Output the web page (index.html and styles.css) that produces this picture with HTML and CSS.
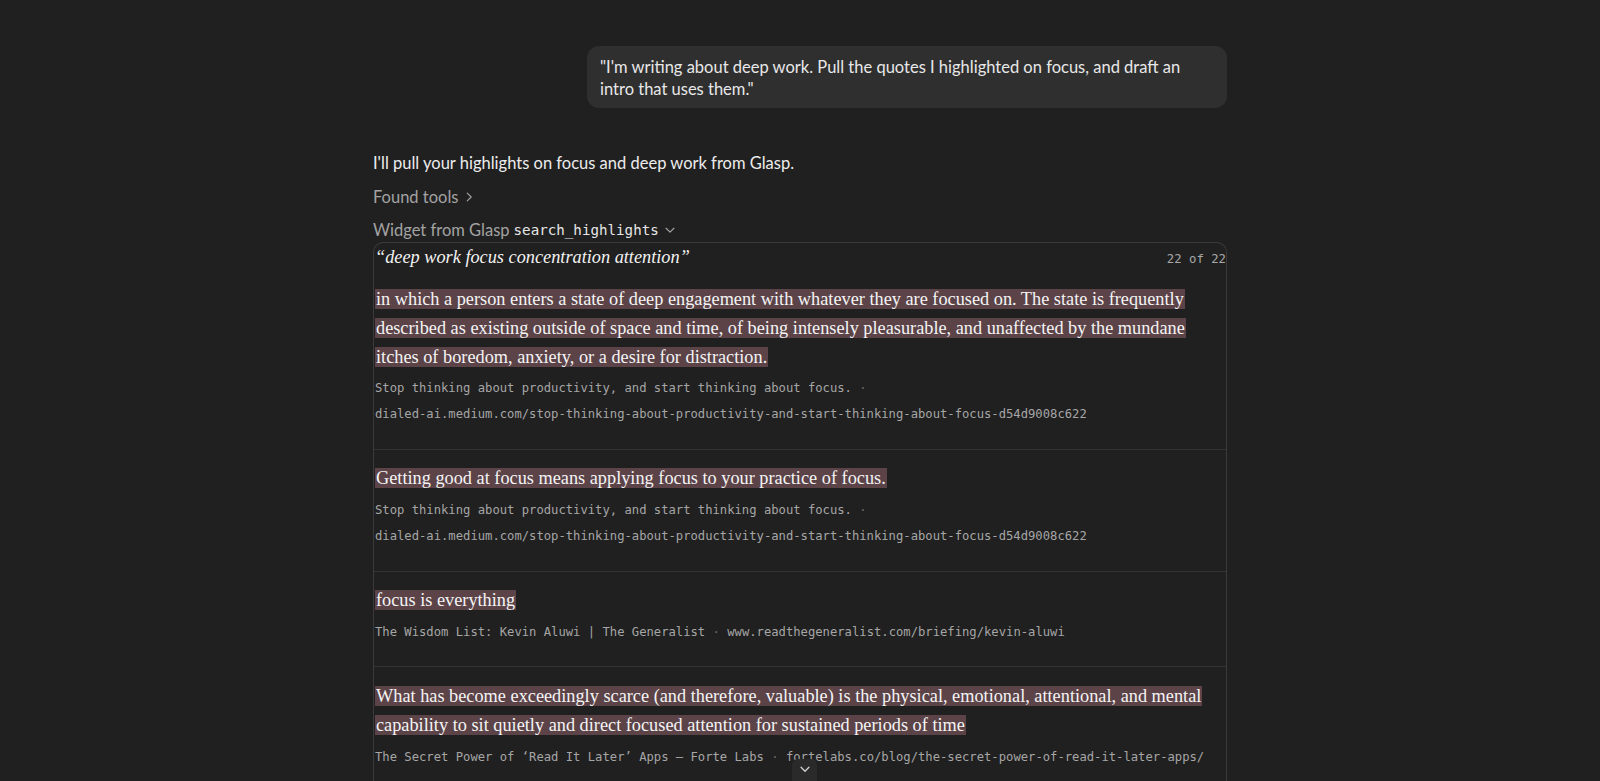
FILE: index.html
```html
<!DOCTYPE html>
<html lang="en">

<head>
    <meta charset="UTF-8">
    <meta name="viewport" content="width=device-width, initial-scale=1.0">
    <title>Glasp highlights</title>
    <link rel="stylesheet" href="styles.css">
</head>

<body>
    <div class="thread">
        <div class="column">
            <div class="user-row">
                <div class="bubble">"I'm writing about deep work. Pull the quotes I highlighted on focus, and draft an intro that uses them."</div>
            </div>

            <div class="reply">
                <div class="reply-text">I'll pull your highlights on focus and deep work from Glasp.</div>
                <div class="found">
                    Found tools
                    <svg width="14" height="14" viewBox="0 0 16 16" fill="none" stroke="currentColor" stroke-width="1.3" stroke-linecap="round" stroke-linejoin="round"><polyline points="6,3.5 10.5,8 6,12.5"/></svg>
                </div>
                <div class="widget-label">
                    Widget from Glasp <code>search_highlights</code>
                    <svg width="14" height="14" viewBox="0 0 16 16" fill="none" stroke="currentColor" stroke-width="1.3" stroke-linecap="round" stroke-linejoin="round"><polyline points="3.5,6 8,10.5 12.5,6"/></svg>
                </div>

                <div class="widget">
                    <div class="widget-head">
                        <span class="query">“deep work focus concentration attention”</span>
                        <span class="count">22 of 22</span>
                    </div>

                    <div class="hl-item">
                        <p class="quote"><mark>in which a person enters a state of deep engagement with whatever they are focused on. The state is frequently described as existing outside of space and time, of being intensely pleasurable, and unaffected by the mundane itches of boredom, anxiety, or a desire for distraction.</mark></p>
                        <div class="meta">Stop thinking about productivity, and start thinking about focus. <span class="dot">·</span> <span class="url">dialed-ai.medium.com/stop-thinking-about-productivity-and-start-thinking-about-focus-d54d9008c622</span></div>
                    </div>

                    <div class="hl-item">
                        <p class="quote"><mark>Getting good at focus means applying focus to your practice of focus.</mark></p>
                        <div class="meta">Stop thinking about productivity, and start thinking about focus. <span class="dot">·</span> <span class="url">dialed-ai.medium.com/stop-thinking-about-productivity-and-start-thinking-about-focus-d54d9008c622</span></div>
                    </div>

                    <div class="hl-item">
                        <p class="quote"><mark>focus is everything</mark></p>
                        <div class="meta">The Wisdom List: Kevin Aluwi | The Generalist <span class="dot">·</span> <span class="url">www.readthegeneralist.com/briefing/kevin-aluwi</span></div>
                    </div>

                    <div class="hl-item">
                        <p class="quote"><mark>What has become exceedingly scarce (and therefore, valuable) is the physical, emotional, attentional, and mental capability to sit quietly and direct focused attention for sustained periods of time</mark></p>
                        <div class="meta">The Secret Power of ‘Read It Later’ Apps — Forte Labs <span class="dot">·</span> <span class="url">fortelabs.co/blog/the-secret-power-of-read-it-later-apps/</span></div>
                    </div>
                </div>
            </div>
        </div>
    </div>

    <button class="scroll-down">
        <svg width="14" height="14" viewBox="0 0 16 16" fill="none" stroke="currentColor" stroke-width="1.5" stroke-linecap="round" stroke-linejoin="round"><polyline points="3.5,6 8,10.5 12.5,6"/></svg>
    </button>
</body>

</html>
```

FILE: styles.css
```css
* {
    margin: 0;
    padding: 0;
    box-sizing: border-box;
}

body {
    background-color: #202020;
    color: #ececec;
    font-family: "Lato", "Noto Sans", sans-serif;
    font-size: 16.5px;
}

.thread {
    height: 100vh;
    overflow: hidden;
}

.column {
    width: 854px;
    margin: 0 auto;
    padding-top: 46px;
}

.user-row {
    display: flex;
    justify-content: flex-end;
}

.bubble {
    max-width: 640px;
    padding: 10px 16px 8px 13px;
    background-color: #2f2f2f;
    border-radius: 12px;
    line-height: 22px;
    color: #e8e8e8;
}

.reply {
    margin-top: 43px;
}

.reply-text {
    line-height: 24px;
}

.found,
.widget-label {
    display: flex;
    align-items: center;
    gap: 4px;
    margin-top: 10px;
    line-height: 24px;
    color: #a3a3a3;
}

.widget-label {
    margin-top: 9px;
}

.widget-label code {
    font-family: "DejaVu Sans Mono", "Liberation Mono", monospace;
    font-size: 14.2px;
    color: #e6e6e6;
}

.widget {
    border: 1px solid #3a3a3a;
    border-bottom: none;
    border-radius: 10px 10px 0 0;
}

.widget-head {
    display: flex;
    justify-content: space-between;
    align-items: baseline;
    line-height: 28px;
    padding-left: 1px;
}

.query {
    font-family: "Liberation Serif", serif;
    font-style: italic;
    font-size: 18.3px;
    color: #f2f2f2;
}

.count {
    font-family: "DejaVu Sans Mono", "Liberation Mono", monospace;
    font-size: 12.3px;
    color: #a8a8a8;
}

.hl-item {
    padding: 12px 0 21.5px 1px;
}

.hl-item + .hl-item {
    border-top: 1px solid #333333;
    padding-top: 14.5px;
}

.quote {
    font-family: "Liberation Serif", serif;
    font-size: 18.3px;
    line-height: 28.8px;
}

.quote mark {
    background-color: #5b4348;
    color: #f4f4f4;
    padding: 0 1px;
    -webkit-box-decoration-break: clone;
    box-decoration-break: clone;
}

.meta {
    margin-top: 4px;
    font-family: "DejaVu Sans Mono", "Liberation Mono", monospace;
    font-size: 12.2px;
    line-height: 26px;
    color: #a6a6a6;
}

.meta .dot {
    color: #6a6a6a;
}

.meta .url {
    white-space: nowrap;
}

.scroll-down {
    position: fixed;
    left: 792px;
    top: 759px;
    width: 25px;
    height: 30px;
    display: flex;
    justify-content: center;
    padding-top: 3px;
    background-color: #2a2a2a;
    border: none;
    border-radius: 6px;
    color: #d0d0d0;
}
```
